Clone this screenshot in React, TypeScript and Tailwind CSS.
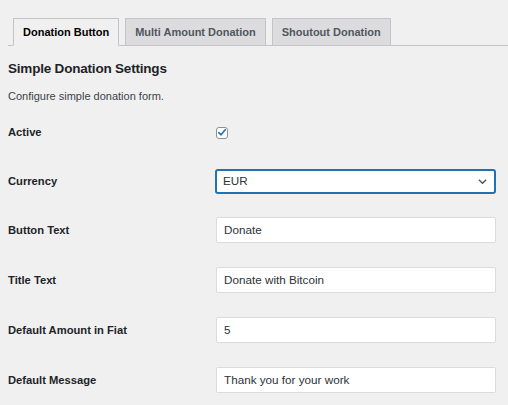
import { useState } from "react";

const TABS = ["Donation Button", "Multi Amount Donation", "Shoutout Donation"];

function Checkbox({ checked }: { checked: boolean }) {
  return (
    <span className="flex h-[12px] w-[12px] items-center justify-center rounded-[3px] border border-[#8c8f94] bg-white">
      {checked && (
        <svg viewBox="0 0 12 12" className="h-[11px] w-[11px]">
          <path d="M2.2 6.2 L4.9 8.8 L9.9 2.6" fill="none" stroke="#2271b1" strokeWidth="1.9" strokeLinecap="round" strokeLinejoin="round" />
        </svg>
      )}
    </span>
  );
}

function TextField({ value }: { value: string }) {
  return (
    <div className="flex h-[26px] w-[280px] items-center rounded-[2px] border border-[#dcdcde] bg-white px-[7px] text-[11.7px] text-[#2c3338]">
      {value}
    </div>
  );
}

export default function App() {
  const [active, setActive] = useState(0);

  return (
    <div className="h-[405px] w-[508px] overflow-hidden bg-[#f0f0f1] pl-[8px] text-[#1d2327]" style={{ fontFamily: "'Liberation Sans', Arial, sans-serif" }}>
      <div className="mt-[18px] flex gap-[6px] border-b border-[#c3c4c7] pl-[5px]">
        {TABS.map((t, i) => (
          <button
            key={t}
            onClick={() => setActive(i)}
            className={`-mb-px flex h-[28px] items-center border border-[#c3c4c7] px-[9px] text-[11px] font-bold ${
              i === active ? "border-b-[#f0f0f1] bg-[#f0f0f1] text-black" : "bg-[#dcdcde] text-[#50575e]"
            }`}
          >
            {t}
          </button>
        ))}
      </div>

      <h2 className="mt-[13px] text-[13.5px] leading-[20px] font-bold tracking-[-0.2px]">Simple Donation Settings</h2>
      <p className="mt-[9px] text-[11px] leading-[16px] text-[#3c434a]">Configure simple donation form.</p>

      <div className="mt-[4px] text-[11.2px]">
        <div className="flex h-[49px] items-center">
          <div className="w-[208px] font-bold">Active</div>
          <Checkbox checked />
        </div>
        <div className="flex h-[48px] items-center">
          <div className="w-[208px] font-bold">Currency</div>
          <div className="-ml-px flex h-[25px] w-[281px] items-center justify-between rounded-[3px] border-2 border-[#2271b1] bg-white pl-[6px] pr-[6px] text-[11.7px] text-[#2c3338]">
            <span>EUR</span>
            <svg viewBox="0 0 12 12" className="h-[11px] w-[11px]">
              <path d="M2 4 L6 8 L10 4" fill="none" stroke="#50575e" strokeWidth="1.5" />
            </svg>
          </div>
        </div>
        {[
          ["Button Text", "Donate"],
          ["Title Text", "Donate with Bitcoin"],
          ["Default Amount in Fiat", "5"],
          ["Default Message", "Thank you for your work"],
        ].map(([label, value]) => (
          <div key={label} className="flex h-[50px] items-center">
            <div className="w-[208px] font-bold">{label}</div>
            <TextField value={value} />
          </div>
        ))}
      </div>
    </div>
  );
}
